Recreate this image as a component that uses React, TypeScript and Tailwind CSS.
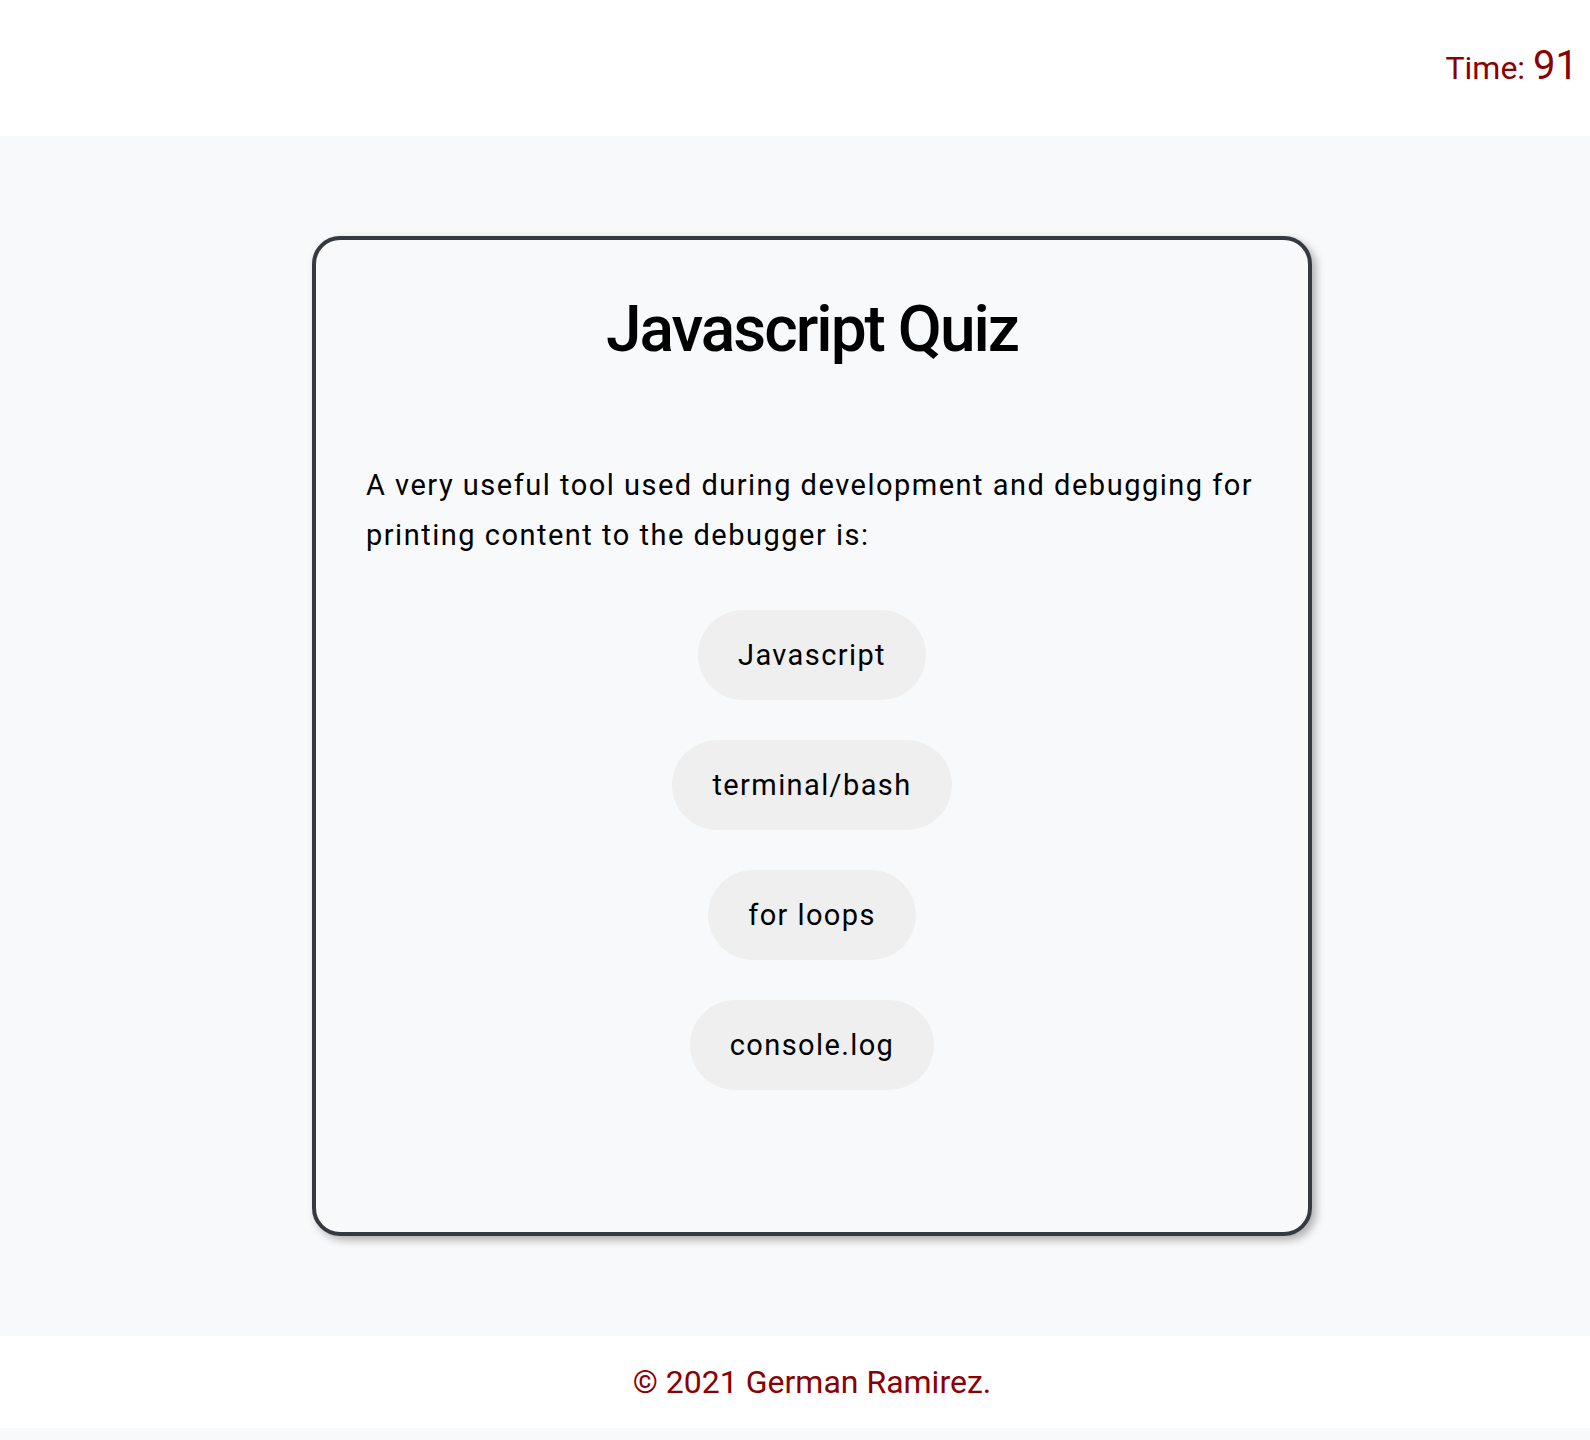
import React from 'react';

const answers = ['Javascript', 'terminal/bash', 'for loops', 'console.log'];

export default function App() {
    return (
        <div className="min-h-[1440px] bg-[#f8f9fa] font-['Roboto',sans-serif] text-black">
            <header className="h-[136px] bg-white flex justify-end">
                <p className="pt-[42px] pr-[12px] text-[32px] leading-[48px] text-[#8b0000]">
                    Time: <span className="text-[40px]">91</span>
                </p>
            </header>

            <main className="py-[100px]">
                <div className="ml-[312px] w-[1000px] h-[1000px] border-4 border-[#343a40] rounded-[28px] shadow-[4px_4px_8px_rgba(0,0,0,0.3)]">
                    <h1 className="mt-[52px] text-center text-[64px] leading-[75px] font-medium tracking-[-2px]">Javascript Quiz</h1>
                    <p className="mt-[93px] px-[50px] text-[29px] leading-[50px] tracking-[1.5px]">
                        A very useful tool used during development and debugging for printing content to the debugger is:
                    </p>
                    <div className="mt-[50px] flex flex-col items-center gap-[40px]">
                        {answers.map((answer) => (
                            <button
                                key={answer}
                                className="h-[90px] px-[40px] rounded-full bg-[#efefef] text-[29px] leading-none tracking-[1.4px]"
                            >
                                {answer}
                            </button>
                        ))}
                    </div>
                </div>
            </main>

            <footer className="h-[92px] bg-white pl-[34px] text-center text-[32px] leading-[92px] text-[#8b0000]">
                © 2021 German Ramirez.
            </footer>
        </div>
    );
}
